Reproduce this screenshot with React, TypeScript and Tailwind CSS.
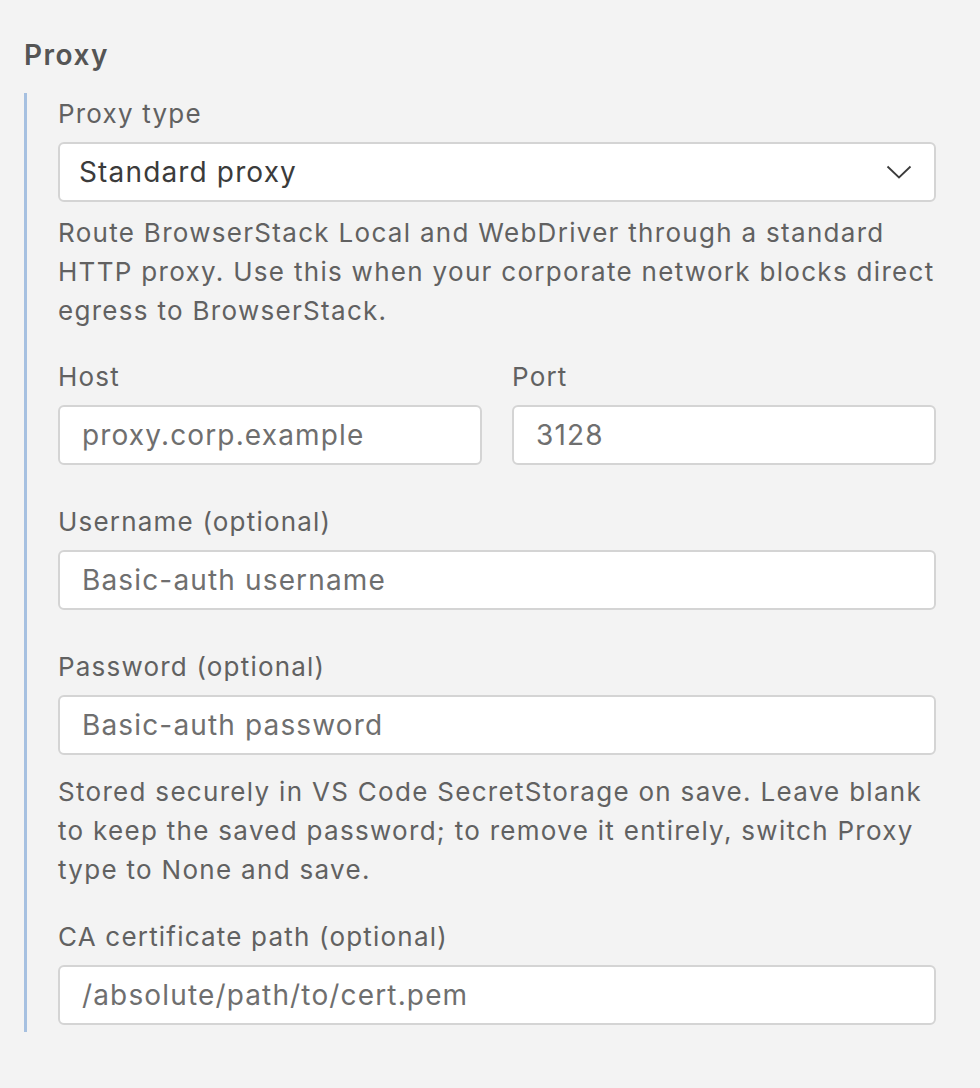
import React from 'react';

const font = { fontFamily: 'Inter, "Noto Sans", sans-serif' };

function Label({ children }: { children: React.ReactNode }) {
  return <div className="text-[26px] leading-[32px] tracking-[1.2px] text-[#616161] mb-[12px]">{children}</div>;
}

function TextInput({ placeholder }: { placeholder: string }) {
  return (
    <input
      placeholder={placeholder}
      className="block w-full h-[60px] bg-white border-2 border-[#d4d4d4] rounded-[6px] px-[22px] text-[28px] tracking-[1.15px] text-[#3b3b3b] placeholder:text-[#6f6f6f] outline-none"
    />
  );
}

function Help({ children, className = '' }: { children: React.ReactNode; className?: string }) {
  return <p className={`text-[26px] leading-[39px] tracking-[1.3px] text-[#616161] ${className}`}>{children}</p>;
}

export default function App() {
  return (
    <div className="min-h-[1088px] w-[980px] bg-[#f3f3f3] pt-[37px] pl-[24px] pr-[44px]" style={font}>
      <h2 className="text-[28px] leading-[36px] tracking-[1.5px] font-semibold text-[#555555]">Proxy</h2>
      <div className="mt-[20px] border-l-[3px] border-[#a6c0e0] pl-[31px] pt-[5px] pb-[7px]">
        <Label>Proxy type</Label>
        <div className="w-full h-[60px] bg-white border-2 border-[#d4d4d4] rounded-[6px] pl-[19px] pr-[22px] flex items-center justify-between text-[28px] tracking-[1.15px] text-[#3b3b3b]">
          <span>Standard proxy</span>
          <svg width="26" height="16" viewBox="0 0 26 16" fill="none">
            <path d="M1.5 2.5L13 13.5L24.5 2.5" stroke="#3b3b3b" strokeWidth="1.8" />
          </svg>
        </div>
        <Help className="mt-[11px]">
          Route BrowserStack Local and WebDriver through a standard HTTP proxy. Use this when your corporate network
          blocks direct egress to BrowserStack.
        </Help>

        <div className="mt-[31px] grid grid-cols-2 gap-[30px]">
          <div>
            <Label>Host</Label>
            <TextInput placeholder="proxy.corp.example" />
          </div>
          <div>
            <Label>Port</Label>
            <TextInput placeholder="3128" />
          </div>
        </div>

        <div className="mt-[41px]">
          <Label>Username (optional)</Label>
          <TextInput placeholder="Basic-auth username" />
        </div>

        <div className="mt-[41px]">
          <Label>Password (optional)</Label>
          <TextInput placeholder="Basic-auth password" />
          <Help className="mt-[17px]">
            Stored securely in VS Code SecretStorage on save. Leave blank to keep the saved password; to remove it
            entirely, switch Proxy type to None and save.
          </Help>
        </div>

        <div className="mt-[32px]">
          <Label>CA certificate path (optional)</Label>
          <TextInput placeholder="/absolute/path/to/cert.pem" />
        </div>
      </div>
    </div>
  );
}
